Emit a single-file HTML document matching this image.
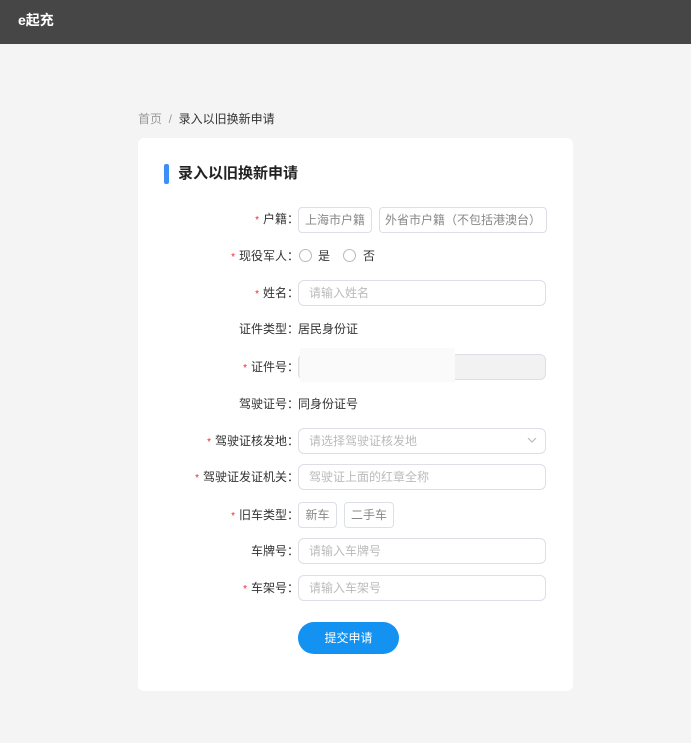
<!DOCTYPE html>
<html><head><meta charset="utf-8">
<style>
*{margin:0;padding:0;box-sizing:border-box}
body{width:691px;height:743px;background:#f4f4f4;font-family:"Liberation Sans","Noto Sans CJK SC",sans-serif;position:relative;overflow:hidden;color:#333}
.hdr{position:absolute;left:0;top:0;width:691px;height:44px;background:#464646;color:#fff;font-size:14px;font-weight:bold;padding:10px 0 0 18px}
.bc{position:absolute;left:138px;top:110px;font-size:12px;color:#999}
.bc b{font-weight:normal;color:#333}
.card{position:absolute;left:138px;top:138px;width:435px;height:553px;background:#fff;border-radius:6px}
.title{position:absolute;left:164px;top:164px;width:5px;height:20px;background:#3e8ef7;border-radius:2px}
.tt{position:absolute;left:178px;top:164px;font-size:15px;font-weight:bold;color:#222;line-height:20px}
.lab{position:absolute;right:392px;font-size:12px;color:#333;line-height:16px;white-space:nowrap}
.lab i{color:#f5222d;font-style:normal;margin-right:4px;font-size:10px}
.in{position:absolute;left:298px;width:248px;height:26px;border:1px solid #dcdfe6;border-radius:6px;font-size:12px;color:#bbb;padding-left:10px;line-height:24px;background:#fff}
.btn{position:absolute;height:26px;border:1px solid #dcdfe6;border-radius:4px;font-size:12px;color:#888;line-height:24px;text-align:center;background:#fff}
.txt{position:absolute;left:298px;font-size:12px;color:#333;line-height:16px}
.rad{position:absolute;width:13px;height:13px;border:1px solid #bbb;border-radius:50%}
.sub{position:absolute;left:298px;top:622px;width:101px;height:32px;background:#1492f2;border-radius:16px;color:#fff;font-size:12px;text-align:center;line-height:32px}
</style></head><body>
<div class="hdr">e起充</div>
<div class="bc">首页&nbsp;&nbsp;/&nbsp;&nbsp;<b>录入以旧换新申请</b></div>
<div class="card"></div>
<div class="title"></div><div class="tt">录入以旧换新申请</div>

<div class="lab" style="top:211px"><i>*</i>户籍：</div>
<div class="btn" style="left:298px;top:207px;width:74px">上海市户籍</div>
<div class="btn" style="left:379px;top:207px;width:168px">外省市户籍（不包括港澳台）</div>

<div class="lab" style="top:248px"><i>*</i>现役军人：</div>
<div class="rad" style="left:299px;top:249px"></div><div class="txt" style="left:318px;top:248px">是</div>
<div class="rad" style="left:343px;top:249px"></div><div class="txt" style="left:363px;top:248px">否</div>

<div class="lab" style="top:285px"><i>*</i>姓名：</div>
<div class="in" style="top:280px">请输入姓名</div>

<div class="lab" style="top:321px">证件类型：</div>
<div class="txt" style="top:321px">居民身份证</div>

<div class="lab" style="top:359px"><i>*</i>证件号：</div>
<div class="in" style="top:354px;background:#f2f2f2"></div>
<div style="position:absolute;left:300px;top:348px;width:155px;height:34px;background:#fafafa"></div>

<div class="lab" style="top:396px">驾驶证号：</div>
<div class="txt" style="top:396px">同身份证号</div>

<div class="lab" style="top:433px"><i>*</i>驾驶证核发地：</div>
<div class="in" style="top:428px">请选择驾驶证核发地<svg style="position:absolute;right:8px;top:8px" width="10" height="7" viewBox="0 0 10 7"><path d="M1 1l4 4 4-4" fill="none" stroke="#bbb" stroke-width="1.2"/></svg></div>

<div class="lab" style="top:469px"><i>*</i>驾驶证发证机关：</div>
<div class="in" style="top:464px">驾驶证上面的红章全称</div>

<div class="lab" style="top:507px"><i>*</i>旧车类型：</div>
<div class="btn" style="left:298px;top:502px;width:39px">新车</div>
<div class="btn" style="left:344px;top:502px;width:50px">二手车</div>

<div class="lab" style="top:543px">车牌号：</div>
<div class="in" style="top:538px">请输入车牌号</div>

<div class="lab" style="top:580px"><i>*</i>车架号：</div>
<div class="in" style="top:575px">请输入车架号</div>

<div class="sub">提交申请</div>
</body></html>
